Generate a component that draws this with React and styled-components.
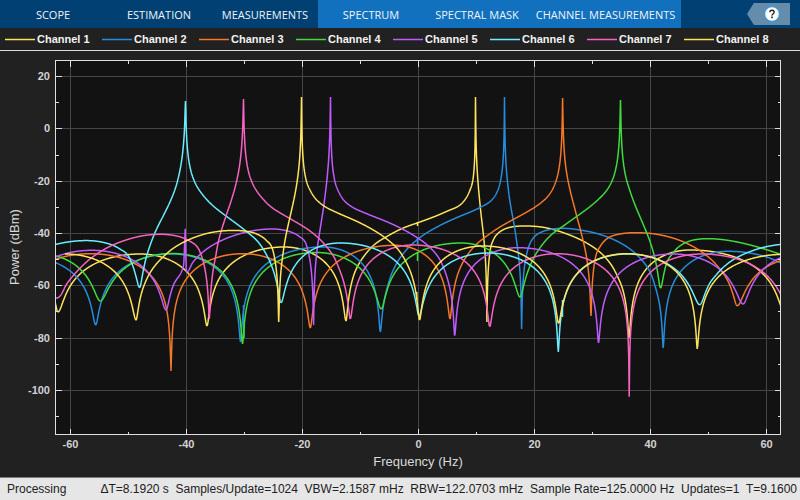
import React from 'react'
import styled, { createGlobalStyle } from 'styled-components'

const GlobalStyle = createGlobalStyle`
  * {
    box-sizing: border-box;
  }

  body {
    margin: 0;
    background: #212121;
    font-family: "Liberation Sans", Arial, sans-serif;
  }
`

const Page = styled.div`
  display: flex;
  flex-direction: column;
  min-height: 100vh;
  background: #212121;
`

const Toolstrip = styled.nav`
  align-items: center;
  background: #004073;
  display: flex;
  height: 28px;
`

const Tab = styled.button`
  background: ${props => props.$contextual ? '#1171be' : 'transparent'};
  border: 0;
  color: #f0f4f8;
  font-family: "Open Sans", "Noto Sans", sans-serif;
  font-size: 11px;
  height: 28px;
  line-height: 16px;
  padding: 2px 0 0;
  white-space: nowrap;
  width: ${props => props.$wide ? '151px' : '106px'};
`

const HelpButton = styled.button`
  align-items: center;
  background: #668cab;
  border: 0;
  clip-path: polygon(16% 0, 100% 0, 100% 100%, 16% 100%, 0 50%);
  display: flex;
  height: 22px;
  justify-content: center;
  margin: 0 10px 0 auto;
  padding: 0 0 0 6px;
  width: 43px;
`

const Legend = styled.ul`
  border-bottom: 1px solid #dcdcdc;
  display: grid;
  grid-template-columns: repeat(8, 1fr);
  height: 23px;
  list-style: none;
  margin: 0;
  padding: 0 19px 0 5px;
`

const LegendItem = styled.li`
  align-items: center;
  color: #f2f2f2;
  display: flex;
  font-size: 11px;
  font-weight: bold;
  gap: 2px;
  line-height: 20px;
  white-space: nowrap;
`

const Chart = styled.svg`
  display: block;
  flex: 1;
  min-height: 0;
  width: 100%;
`

const TickLabel = styled.text`
  fill: #d2d2d2;
  font-size: 11px;
  font-weight: bold;
`

const AxisTitle = styled.text`
  fill: #d9d9d9;
  font-size: 13px;
  text-anchor: middle;
`

const StatusBar = styled.footer`
  align-items: center;
  background: #e6e6e6;
  border-top: 1px solid #7c7c7c;
  color: #212121;
  display: flex;
  font-size: 12px;
  height: 23px;
  justify-content: space-between;
  padding: 0 3px 0 7px;
  white-space: pre;
`

const POLE = 1
const NULL = -1

// Each trace is a list of runs. 'lobes' runs list alternating crests and nulls,
// 'curve' runs list points, with the ends marked where the log scale blows up.
const channels = [
  {
    name: 'Channel 1',
    color: '#ffe45c',
    runs: [
      ['lobes', [20, 260], [58, 312], [140, 254], [207, 326], [284, 247], [346, 321]],
      ['curve', [346, 321, NULL], [353, 278], [362, 259], [374, 245], [386, 237], [401, 229], [417, 223], [443, 213], [450, 210], [460, 205], [466.7, 197], [470, 190], [472.7, 181], [475.5, 97, POLE]],
      ['curve', [475.5, 97, POLE], [479.3, 197], [481.7, 220], [486.9, 322, NULL]],
      ['curve', [486.9, 322, NULL], [489.8, 253], [493.3, 240], [500, 231.7], [510, 227.3], [525, 226], [547, 228], [567, 234], [590, 245], [602, 254], [612, 266], [620, 282], [629, 338, NULL]],
      ['lobes', [629, 338], [690, 250], [784, 312]],
    ],
    spurs: [[417.5, 222, 226]],
  },
  {
    name: 'Channel 2',
    color: '#268cdd',
    runs: [
      ['lobes', [25, 257], [95.7, 325], [172, 254], [240.5, 342], [323, 247], [380.3, 332]],
      ['curve', [380.3, 332, NULL], [386.7, 290], [392, 273], [400, 258], [410, 246], [420, 237.5], [437, 227], [457, 217.5], [480, 207.5], [491.7, 200], [498.3, 189], [501.7, 174], [504.5, 97, POLE]],
      ['curve', [504.5, 97, POLE], [507.3, 180], [510.7, 206], [514, 224], [517.3, 246], [521.6, 329, NULL]],
      ['curve', [521.6, 329, NULL], [525, 263], [528.3, 248], [533.3, 238], [541.7, 232], [553, 229], [563, 228.3], [580, 230], [595, 233], [610, 238], [626.7, 246.7], [640, 258], [650, 272], [658, 297], [663.2, 348, NULL]],
      ['lobes', [663.2, 348], [728, 251.3], [817, 330]],
    ],
    spurs: [[417.5, 238, 244], [243.5, 305, 322]],
  },
  {
    name: 'Channel 3',
    color: '#f57729',
    runs: [
      ['lobes', [10, 330], [90, 253.7], [171, 371], [243, 253.7], [310.3, 328], [395, 245.3], [450, 319]],
      ['curve', [450, 319, NULL], [456.7, 278], [463.3, 261.7], [473.3, 247.5], [486.7, 236], [503.3, 225], [523.3, 214], [540, 203.5], [550, 193.5], [556, 181], [559, 168.5], [562.6, 98, POLE]],
      ['curve', [562.6, 98, POLE], [565.3, 163], [568.3, 182], [573.3, 203], [578.3, 222], [585, 249], [591, 316, NULL]],
      ['curve', [591, 316, NULL], [595, 260], [600, 246.7], [608, 238], [620, 234], [638, 232.7], [656.7, 234.3], [676.7, 239.3], [693.3, 246.7], [710, 258.5], [723.3, 274], [737.3, 305.7, NULL]],
      ['lobes', [737.3, 305.7], [800, 258]],
    ],
  },
  {
    name: 'Channel 4',
    color: '#3fdb3f',
    runs: [
      ['lobes', [40, 254], [100.3, 301], [172, 253.5], [242.5, 344], [316.5, 252.5], [381.3, 309], [461, 243], [520, 297]],
      ['curve', [520, 297, NULL], [530, 267], [536.7, 253], [546.7, 239.5], [563.3, 226], [583.3, 211.7], [598.3, 199.5], [608.3, 188], [615, 172], [620.5, 100, POLE]],
      ['curve', [620.5, 100, POLE], [625, 173], [630, 191], [638.3, 213], [649, 239], [655, 260], [660.5, 288, NULL]],
      ['curve', [660.5, 288, NULL], [666, 266.7], [671.7, 255], [680, 246], [690, 241], [706.7, 238.7], [723.3, 239.7], [743.3, 243.3], [763.3, 248.7], [781, 254.5]],
    ],
    spurs: [[417.5, 253, 261], [244, 322, 338]],
  },
  {
    name: 'Channel 5',
    color: '#c05cff',
    runs: [
      ['lobes', [14, 320], [91.7, 250.3], [166, 310]],
      ['curve', [166, 310, NULL], [171.7, 292], [180, 275], [183.5, 266], [185.2, 229]],
      ['curve', [185.2, 229], [186.5, 272], [193.3, 261.7], [206.7, 249], [223.3, 239.7], [240, 233.7], [253, 230.7], [273.3, 229], [290, 231.7], [300, 237], [306.7, 246], [313.6, 325, NULL]],
      ['curve', [313.6, 325, NULL], [318.3, 241], [322.7, 213], [326, 188], [330.5, 97, POLE]],
      ['curve', [330.5, 97, POLE], [335, 181.7], [338.3, 191], [343.3, 199.5], [351.7, 206.7], [366.7, 213.7], [386.7, 221.7], [403.3, 229.5], [417, 237.5], [430, 247.5], [440, 260], [448.3, 282], [454.7, 335.7, NULL]],
      ['lobes', [454.7, 335.7], [518, 247.7], [598.5, 343], [673, 254], [743, 304], [810, 252]],
    ],
  },
  {
    name: 'Channel 6',
    color: '#6aeeff',
    runs: [
      ['curve', [55, 244.5], [70, 241.7], [90, 240.7], [106.7, 243.3], [120, 249.3], [130, 260], [139.7, 287.5, NULL]],
      ['curve', [139.7, 287.5, NULL], [148.7, 250], [156.7, 229], [166.7, 209], [175, 189.5], [180, 170], [185.5, 101, POLE]],
      ['curve', [185.5, 101, POLE], [190, 167], [194.3, 181], [201.7, 193.5], [213.3, 206], [228.3, 217.7], [246.7, 231.7], [260, 244.5], [268, 258], [281, 302.7, NULL]],
      ['lobes', [281, 302.7], [340, 243], [419, 316], [488, 253], [558.3, 352], [627, 254], [699.7, 304.7]],
      ['curve', [699.7, 304.7, NULL], [707.7, 290], [716.7, 275], [733, 260], [750, 251.7], [763, 247.5], [781, 244.3]],
    ],
    spurs: [[562.5, 300, 317]],
  },
  {
    name: 'Channel 7',
    color: '#f763c2',
    runs: [
      ['curve', [54, 298], [57, 298], [60, 296], [66.7, 284], [76.7, 271.7], [90, 259], [106.7, 248], [123, 241], [143, 235.7], [160, 234.3], [176.7, 236], [190, 241.3], [200, 252], [209.3, 319, NULL]],
      ['curve', [209.3, 319, NULL], [215, 260], [218.5, 241], [225, 219], [231.7, 199], [238.3, 173], [243.5, 99, POLE]],
      ['curve', [243.5, 99, POLE], [247.7, 168], [253.3, 185], [261.7, 197.5], [270, 206], [286.7, 216.7], [303.3, 226.5], [312, 232.5], [323, 242.5], [333, 255.5], [341.7, 276], [350.3, 319, NULL]],
      ['lobes', [350.3, 319], [413, 245], [489.7, 326.7], [556.7, 253.7], [629.2, 396.7], [701.7, 254], [788, 305]],
    ],
  },
  {
    name: 'Channel 8',
    color: '#ffe45c',
    runs: [
      ['lobes', [65, 254], [136, 320]],
      ['curve', [136, 320, NULL], [143, 289], [150, 273], [163, 257], [173, 248.5], [186.7, 240.7], [206.7, 233.5], [220, 231.2], [236, 230.5], [256.7, 234], [266.7, 240.7], [273.3, 252], [278.7, 322, NULL]],
      ['curve', [278.7, 322, NULL], [281.7, 264], [285.3, 239], [289.3, 220], [295, 194], [301.5, 97, POLE]],
      ['curve', [301.5, 97, POLE], [306.7, 182], [310, 190], [315, 198], [323.3, 205.5], [336.7, 212.5], [356.7, 221.3], [373.3, 230], [388, 240], [400, 252], [408, 266], [419.5, 320, NULL]],
      ['lobes', [419.5, 320], [483, 246], [558.5, 323.5], [627, 253.7], [697.2, 349], [785, 254.3]],
    ],
    spurs: [[416.8, 292, 300]],
  },
]

// Height in px of one neper on the 20 dB / 52.3 px scale
const NEPER = 22.7

// |sin| shaped lobe on a log scale, going from a crest to a null or back
const lobePoints = (from, to) => {
  const [crest, dip] = from[1] < to[1] ? [from, to] : [to, from]
  const floor = Math.exp(-2 * (dip[1] - crest[1]) / NEPER)
  const steps = Math.ceil(Math.abs(to[0] - from[0]) * 2)
  return Array.from({ length: steps + 1 }, (_, i) => {
    const x = from[0] + (to[0] - from[0]) * i / steps
    const s = Math.sin(Math.PI / 2 * (x - dip[0]) / (crest[0] - dip[0]))
    return [x, crest[1] - NEPER / 2 * Math.log((s * s * (1 - floor)) + floor)]
  })
}

// Monotone cubic interpolation
const interpolate = (points, x) => {
  const slopes = points.slice(1).map((p, i) => (p[1] - points[i][1]) / (p[0] - points[i][0]))
  const tangent = i => {
    if (i === 0) return slopes[0]
    if (i === points.length - 1) return slopes[i - 1]
    const a = slopes[i - 1]
    const b = slopes[i]
    return a * b <= 0 ? 0 : 2 * a * b / (a + b)
  }
  const next = points.findIndex((p, i) => i > 0 && x <= p[0])
  const i = next < 0 ? points.length - 2 : next - 1
  const [x0, y0] = points[i]
  const [x1, y1] = points[i + 1]
  const h = x1 - x0
  const t = (x - x0) / h
  return y0 * (1 + 2 * t) * (1 - t) ** 2
    + h * tangent(i) * t * (1 - t) ** 2
    + y1 * t * t * (3 - 2 * t)
    + h * tangent(i + 1) * t * t * (t - 1)
}

// Continues the line through b and a: straight on to a pole, level to a null
const extend = ([x, , kind], a, b) => {
  const slope = kind === POLE ? (a[1] - b[1]) / (a[0] - b[0]) : 0
  return [x, a[1] + slope * (x - a[0])]
}

// Takes the logarithms of the poles and nulls out of the points, interpolates
// the smooth rest, and puts the logarithms back
const curvePoints = points => {
  const first = points[0]
  const last = points[points.length - 1]
  const ends = [first, last].filter(p => p[2])
  const inner = points.filter(p => !p[2])
  const log = ([x0, , kind], x, soft = 0) => kind * NEPER / 2 * Math.log((x - x0) ** 2 + soft ** 2)
  const rest = inner.map(([x, y]) => [x, y - ends.reduce((sum, e) => sum + log(e, x), 0)])
  const n = rest.length
  const before = first[2] ? [extend(first, rest[0], rest[1])] : []
  const after = last[2] ? [extend(last, rest[n - 1], rest[n - 2])] : []
  const smooth = [...before, ...rest, ...after]
  const softness = ends.map(end => {
    const others = ends.filter(e => e !== end).reduce((sum, e) => sum + log(e, end[0]), 0)
    return Math.exp((end[1] - interpolate(smooth, end[0]) - others) / (end[2] * NEPER))
  })
  const steps = Math.ceil((last[0] - first[0]) * 4)
  return Array.from({ length: steps + 1 }, (_, i) => {
    const x = first[0] + (last[0] - first[0]) * i / steps
    return [x, interpolate(smooth, x) + ends.reduce((sum, e, j) => sum + log(e, x, softness[j]), 0)]
  })
}

const toPath = points => 'M' + points.map(([x, y]) => `${x.toFixed(2)} ${y.toFixed(2)}`).join('L')

const runPath = ([kind, ...points]) => {
  if (kind === 'curve') return toPath(curvePoints(points))
  return points.slice(1).map((p, i) => toPath(lobePoints(points[i], p))).join('')
}

const Trace = ({ channel }) => (
  <g fill="none" stroke={channel.color} strokeWidth="1.5" strokeLinejoin="bevel">
    <path d={channel.runs.map(runPath).join('')} />
    {channel.spurs && <path d={channel.spurs.map(([x, a, b]) => `M${x} ${a}V${b}`).join('')} />}
  </g>
)

const PLOT = { left: 55.5, top: 60.5, right: 780.5, bottom: 434.5 }
const xTicks = [-60, -40, -20, 0, 20, 40, 60]
const xMinor = [-50, -30, -10, 10, 30, 50]
const yTicks = [20, 0, -20, -40, -60, -80, -100]
const yMinor = [10, -10, -30, -50, -70, -90, -110]

const xAt = hz => 418.5 + hz * 5.8
const yAt = db => Math.floor(128.9 - db * 2.615) + 0.5

const xTickPath = (values, size) => values.map(v => (
  `M${xAt(v)} ${PLOT.top}v${size}M${xAt(v)} ${PLOT.bottom}v${-size}`
)).join('')

const yTickPath = (values, size) => values.map(v => (
  `M${PLOT.left} ${yAt(v)}h${size}M${PLOT.right} ${yAt(v)}h${-size}`
)).join('')

const Spectrum = () => (
  <Chart viewBox="0 51 800 426" role="img" aria-label="Power (dBm) over Frequency (Hz)">
    <defs>
      <clipPath id="plot">
        <rect x="56" y="61" width="724" height="373" />
      </clipPath>
    </defs>
    <g shapeRendering="crispEdges" fill="none">
      <rect x="55" y="60" width="726" height="375" fill="#121212" />
      <path
        stroke="#464646"
        d={xTicks.map(v => `M${xAt(v)} 61V434`).join('') + yTicks.map(v => `M56 ${yAt(v)}H780`).join('')}
      />
    </g>
    <g clipPath="url(#plot)">
      {channels.map(channel => <Trace key={channel.name} channel={channel} />)}
    </g>
    <g shapeRendering="crispEdges" fill="none" stroke="#dedede">
      <path d={xTickPath(xTicks, 6) + xTickPath(xMinor, 3) + yTickPath(yTicks, 6) + yTickPath(yMinor, 3)} />
      <rect x="55.5" y="60.5" width="725" height="374" />
    </g>
    {xTicks.map(v => (
      <TickLabel key={v} x={xAt(v)} y="448" textAnchor="middle">{v}</TickLabel>
    ))}
    {yTicks.map(v => (
      <TickLabel key={v} x="50" y={yAt(v) + 3.5} textAnchor="end">{v}</TickLabel>
    ))}
    <AxisTitle x="418" y="466">Frequency (Hz)</AxisTitle>
    <AxisTitle x="-247" y="19" transform="rotate(-90)">Power (dBm)</AxisTitle>
  </Chart>
)

const HelpIcon = () => (
  <svg width="16" height="16" viewBox="0 0 16 16" fill="none" aria-hidden="true">
    <circle cx="8" cy="8" r="7.3" fill="#fff" stroke="#2f96e8" />
    <path d="M5.9 6.3Q5.9 4.3 8 4.3T10.1 6.2Q10.1 7.2 9 8T8 9.6" stroke="#222" strokeWidth="1.4" />
    <path d="M8 10.6V12.2" stroke="#222" strokeWidth="1.6" />
  </svg>
)

const App = () => {
  return (
    <Page>
      <GlobalStyle />
      <Toolstrip>
        <Tab>SCOPE</Tab>
        <Tab>ESTIMATION</Tab>
        <Tab>MEASUREMENTS</Tab>
        <Tab $contextual>SPECTRUM</Tab>
        <Tab $contextual>SPECTRAL MASK</Tab>
        <Tab $contextual $wide>CHANNEL MEASUREMENTS</Tab>
        <HelpButton aria-label="Help"><HelpIcon /></HelpButton>
      </Toolstrip>
      <Legend>
        {channels.map(({ name, color }) => (
          <LegendItem key={name}>
            <svg width="30" height="3" aria-hidden="true">
              <path d="M0 1.5H30" stroke={color} strokeWidth="1.5" />
            </svg>
            {name}
          </LegendItem>
        ))}
      </Legend>
      <Spectrum />
      <StatusBar>
        <span>Processing</span>
        <span>ΔT=8.1920 s  Samples/Update=1024  VBW=2.1587 mHz  RBW=122.0703 mHz  Sample Rate=125.0000 Hz  Updates=1  T=9.1600</span>
      </StatusBar>
    </Page>
  )
}

export default App
